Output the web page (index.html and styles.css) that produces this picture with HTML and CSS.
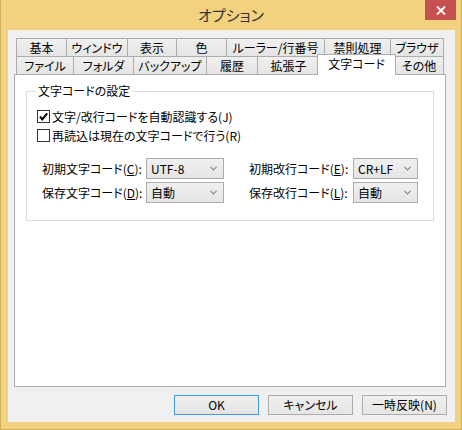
FILE: index.html
```html
<!DOCTYPE html>
<html lang="ja">
<head>
<meta charset="utf-8">
<title>オプション</title>
<link rel="stylesheet" href="styles.css">
</head>
<body>
<div class="window">
  <div class="titlebar">
    <div class="title-spacer"></div>
    <div class="title">オプション</div>
    <div class="close"><svg width="10" height="9" viewBox="0 0 10 9"><path d="M1 0.5 L9 8.5 M9 0.5 L1 8.5" stroke="#fff" stroke-width="1.8" fill="none"/></svg></div>
  </div>
  <div class="client">
    <div class="tabs">
      <div class="tabrow row1">
        <div class="tab">基本</div>
        <div class="tab">ウィンドウ</div>
        <div class="tab">表示</div>
        <div class="tab">色</div>
        <div class="tab">ルーラー/行番号</div>
        <div class="tab">禁則処理</div>
        <div class="tab last">ブラウザ</div>
      </div>
      <div class="tabrow row2">
        <div class="tab">ファイル</div>
        <div class="tab">フォルダ</div>
        <div class="tab">バックアップ</div>
        <div class="tab">履歴</div>
        <div class="tab">拡張子</div>
        <div class="tab selected">文字コード</div>
        <div class="tab last">その他</div>
      </div>
      <div class="panel">
        <fieldset class="group">
          <legend>文字コードの設定</legend>
          <div class="checks">
            <div class="check"><span class="box"><svg width="11" height="11" viewBox="0 0 11 11"><path d="M2 5.5 L4.3 8.3 L9.2 2.3" stroke="#000" stroke-width="2" fill="none"/></svg></span>文字/改行コードを自動認識する(J)</div>
            <div class="check"><span class="box"></span>再読込は現在の文字コードで行う(R)</div>
          </div>
          <div class="settings">
            <span class="lbl">初期文字コード(<u>C</u>):</span>
            <div class="combo"><span>UTF-8</span><svg width="7" height="5" viewBox="0 0 7 5"><path d="M0.5 0.8 L3.5 3.8 L6.5 0.8" stroke="#8a8a8a" stroke-width="1.2" fill="none"/></svg></div>
            <span class="lbl lbl2">初期改行コード(<u>E</u>):</span>
            <div class="combo"><span>CR+LF</span><svg width="7" height="5" viewBox="0 0 7 5"><path d="M0.5 0.8 L3.5 3.8 L6.5 0.8" stroke="#8a8a8a" stroke-width="1.2" fill="none"/></svg></div>
            <span class="lbl">保存文字コード(<u>D</u>):</span>
            <div class="combo"><span>自動</span><svg width="7" height="5" viewBox="0 0 7 5"><path d="M0.5 0.8 L3.5 3.8 L6.5 0.8" stroke="#8a8a8a" stroke-width="1.2" fill="none"/></svg></div>
            <span class="lbl lbl2">保存改行コード(<u>L</u>):</span>
            <div class="combo"><span>自動</span><svg width="7" height="5" viewBox="0 0 7 5"><path d="M0.5 0.8 L3.5 3.8 L6.5 0.8" stroke="#8a8a8a" stroke-width="1.2" fill="none"/></svg></div>
          </div>
        </fieldset>
      </div>
    </div>
    <div class="buttons">
      <div class="btn default">OK</div>
      <div class="btn">キャンセル</div>
      <div class="btn">一時反映(N)</div>
    </div>
  </div>
</div>
</body>
</html>
```
FILE: styles.css
```css
* { box-sizing: border-box; }
html, body { margin: 0; padding: 0; }
body {
  width: 462px;
  height: 430px;
  overflow: hidden;
  background: #F2D27E;
  font-family: "Noto Sans CJK JP", "Noto Sans", sans-serif;
  font-size: 12px;
  color: #000;
  font-feature-settings: "palt";
}
.window {
  width: 462px;
  height: 430px;
  background: #F2D27E;
  border: 1px solid #CFAF5F;
  border-top: none;
  display: flex;
  flex-direction: column;
}
.titlebar {
  height: 30px;
  display: flex;
  align-items: flex-start;
  flex: none;
}
.title-spacer { width: 36px; }
.title {
  flex: 1;
  text-align: center;
  font-size: 15px;
  line-height: 30px;
  color: #333;
}
.close {
  width: 31px;
  height: 20px;
  margin-right: 5px;
  background: #C75050;
  display: flex;
  align-items: center;
  justify-content: center;
}
.client {
  width: 447px;
  height: 392px;
  margin-left: 7px;
  background: #F0F0F0;
  padding: 8px 0 0 6px;
  display: flex;
  flex-direction: column;
  flex: none;
}
.tabs { width: 432px; }
.tabrow {
  display: grid;
  height: 18px;
  margin: 0 2px;
}
.row1 { grid-template-columns: 50px 61px 49px 50px 98px 66px 54px; }
.row2 { grid-template-columns: 57px 60px 73px 51px 62px 75px 50px; }
.tab {
  border-top: 1px solid #ACACAC;
  border-left: 1px solid #ACACAC;
  background: linear-gradient(#F0F0F0, #E5E5E5);
  text-align: center;
  line-height: 17px;
  white-space: nowrap;
}
.tab.last { border-right: 1px solid #ACACAC; }
.tab.selected {
  position: relative;
  z-index: 1;
  margin: -2px -2px -1px -2px;
  background: #fff;
  border-right: 1px solid #ACACAC;
  line-height: 18px;
}
.panel {
  height: 313px;
  border: 1px solid #ACACAC;
  background: #fff;
  padding: 8px 11px 0 11px;
}
.group {
  margin: 0;
  min-width: 0;
  border: 1px solid #DCDCDC;
  padding: 0 0 17px 9px;
}
.group legend {
  padding: 0 2px;
  line-height: 16px;
}
.checks { padding-top: 8px; }
.check {
  display: flex;
  align-items: center;
  height: 19px;
  white-space: nowrap;
}
.box {
  width: 13px;
  height: 13px;
  margin: 0 2px 0 1px;
  border: 1px solid #333;
  background: #fff;
  display: flex;
  align-items: center;
  justify-content: center;
}
.settings {
  margin: 13px 0 0 6px;
  display: grid;
  grid-template-columns: 104px 78px 129px 65px;
  row-gap: 3px;
  align-items: center;
}
.lbl { white-space: nowrap; }
.lbl2 { padding-left: 25px; }
.combo {
  height: 21px;
  border: 1px solid #ACACAC;
  background: linear-gradient(#F0F0F0, #E5E5E5);
  display: flex;
  align-items: center;
  justify-content: space-between;
  padding: 0 6px 0 4px;
}
.buttons {
  display: flex;
  justify-content: flex-end;
  gap: 9px;
  margin-top: 8px;
  padding-right: 8px;
}
.btn {
  width: 85px;
  height: 20px;
  border: 1px solid #ACACAC;
  background: linear-gradient(#F0F0F0, #E5E5E5);
  text-align: center;
  line-height: 18px;
}
.btn.default { border-color: #3C9CE8; }
```
